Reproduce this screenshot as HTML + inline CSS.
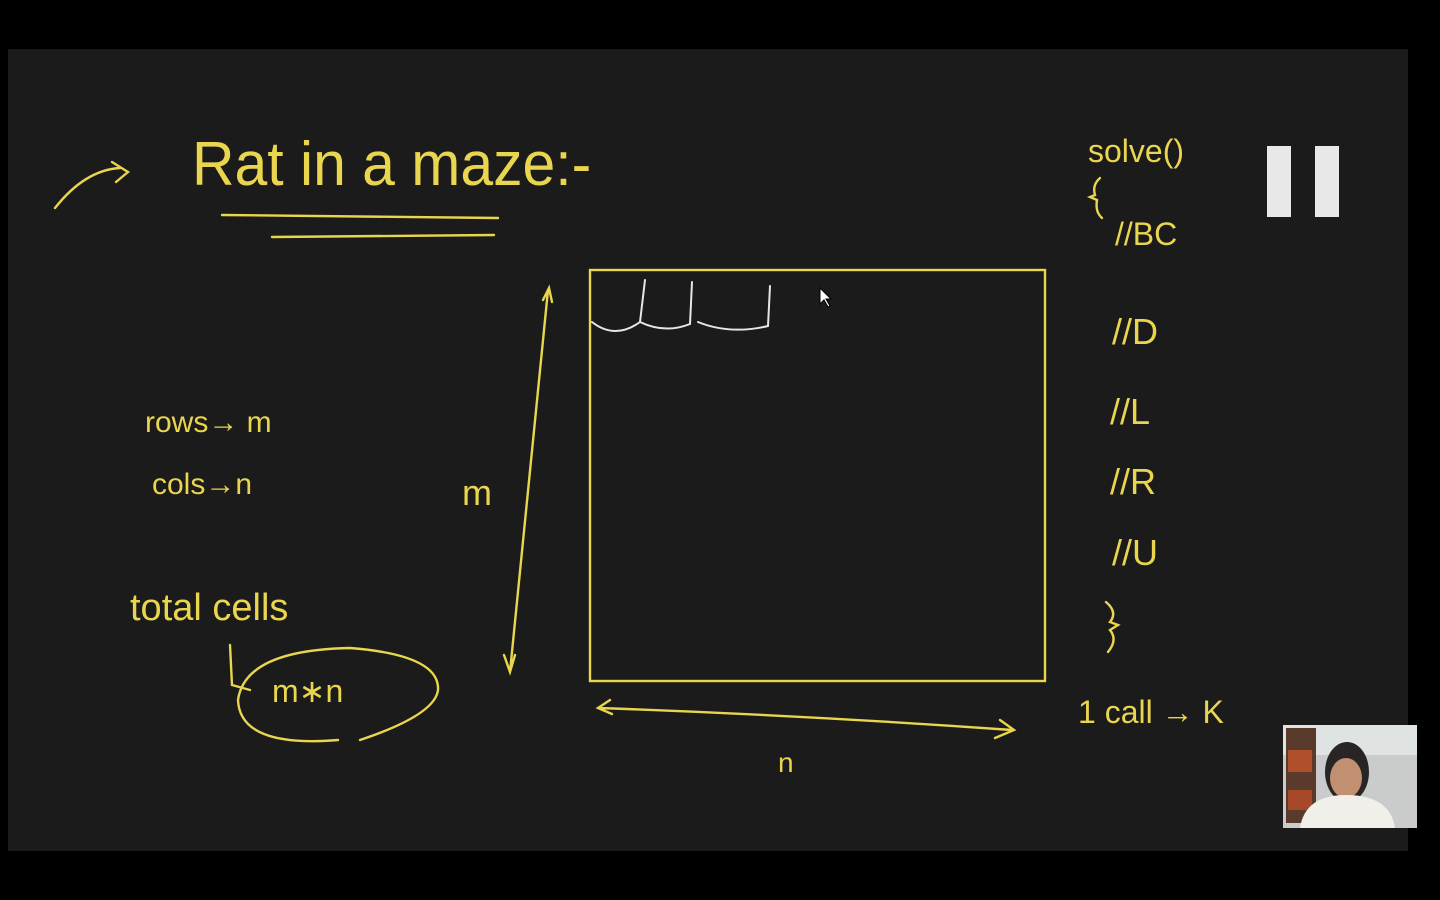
<!DOCTYPE html>
<html><head><meta charset="utf-8"><style>
html,body{margin:0;padding:0;background:#000;width:1440px;height:900px;overflow:hidden}
svg{display:block}
text{font-family:"Liberation Sans",sans-serif;fill:#e9d54e;font-weight:normal}
</style></head><body>
<svg width="1440" height="900" viewBox="0 0 1440 900">
<rect x="0" y="0" width="1440" height="900" fill="#000"/>
<rect x="8" y="49" width="1400" height="802" fill="#1b1b1b"/>
<g fill="none" stroke="#e9d54e" stroke-width="2.4" stroke-linecap="round">
<path d="M55 208 Q85 170 120 168 M112 162 L128 172 L116 182"/>
<path d="M222 215 L498 218"/>
<path d="M272 237 L494 235"/>
<rect x="590" y="270" width="455" height="411"/>
<path d="M548 290 L510 672 M543 300 L549 288 L552 302 M504 655 L510 672 L515 655"/>
<path d="M598 708 Q800 715 1012 730 M1000 720 L1014 730 L995 738 M610 700 L598 708 L612 714"/>
<path d="M230 645 L232 685 L250 690"/>
<path d="M338 740 Q240 748 238 700 Q245 650 350 648 Q440 655 438 690 Q435 715 360 740"/>
<path d="M1100 178 Q1092 185 1095 195 L1090 197 L1097 200 Q1095 212 1102 218"/>
<path d="M1106 602 Q1118 612 1110 622 L1118 625 L1110 630 Q1118 640 1108 652"/>
</g>
<g fill="none" stroke="#e6e6e6" stroke-width="2" stroke-linecap="round">
<path d="M592 322 Q615 340 640 322 L645 280 M640 322 Q665 334 690 324 L692 282 M698 322 Q730 335 768 326 L770 286"/>
</g>
<path d="M820 288 L820 304 L824 300 L828 307 L830 306 L826 299 L831 299 Z" fill="#fff" stroke="#000" stroke-width="1"/>
<text x="192" y="185" font-size="62" transform="translate(192 185) scale(0.95 1) translate(-192 -185)">Rat in a maze:-</text>
<text x="145" y="432" font-size="30">rows→ m</text>
<text x="152" y="494" font-size="30">cols→n</text>
<text x="462" y="505" font-size="36">m</text>
<text x="130" y="620" font-size="38">total cells</text>
<text x="272" y="702" font-size="32">m∗n</text>
<text x="778" y="772" font-size="28">n</text>
<text x="1088" y="162" font-size="32">solve()</text>
<text x="1115" y="245" font-size="32">//BC</text>
<text x="1112" y="344" font-size="36">//D</text>
<text x="1110" y="424" font-size="36">//L</text>
<text x="1110" y="494" font-size="36">//R</text>
<text x="1112" y="565" font-size="36">//U</text>
<text x="1078" y="723" font-size="32">1 call → K</text>
<rect x="1267" y="146" width="24" height="71" fill="#e8e8e8"/>
<rect x="1315" y="146" width="24" height="71" fill="#e8e8e8"/>
<rect x="1283" y="725" width="134" height="103" fill="#c9ccca"/>
<rect x="1283" y="725" width="134" height="30" fill="#dfe3e2"/>
<rect x="1286" y="728" width="30" height="95" fill="#5a3a2a"/>
<rect x="1288" y="750" width="24" height="22" fill="#b0502a"/>
<rect x="1288" y="790" width="24" height="20" fill="#a8482a"/>
<ellipse cx="1347" cy="772" rx="22" ry="30" fill="#2a2525"/>
<ellipse cx="1346" cy="778" rx="16" ry="20" fill="#c09070"/>
<path d="M1300 828 Q1305 795 1346 795 Q1390 795 1395 828 Z" fill="#f0efea"/>
</svg>
</body></html>
